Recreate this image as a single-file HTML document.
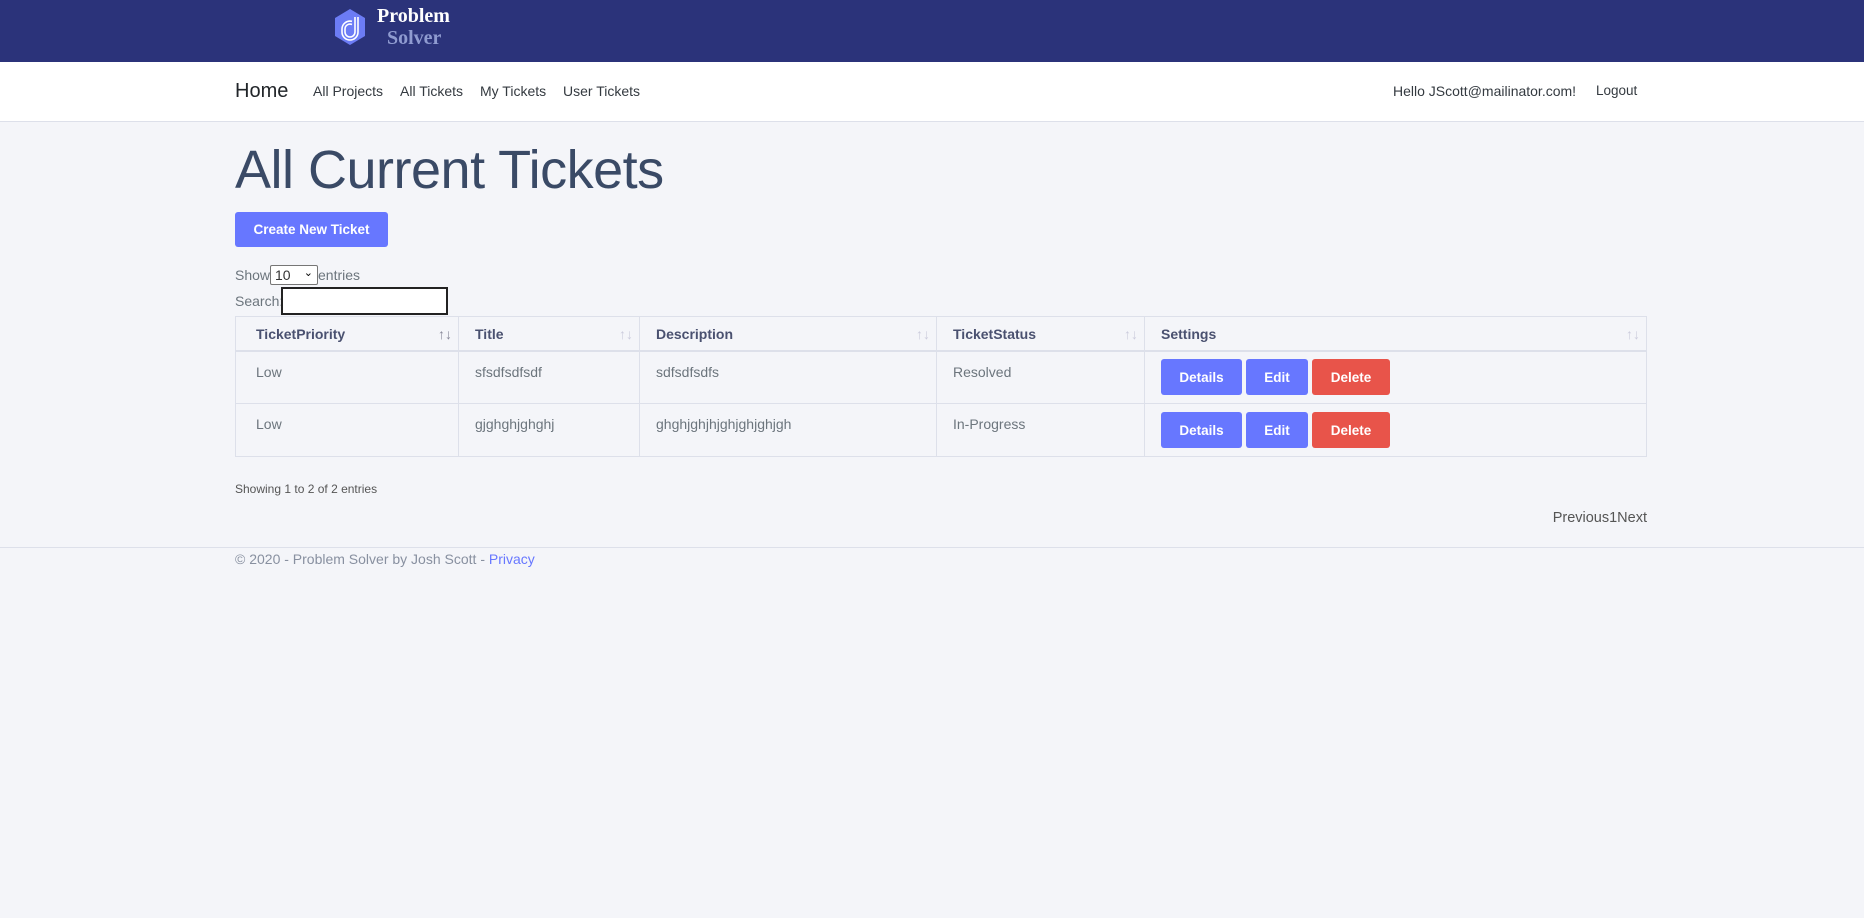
<!DOCTYPE html>
<html><head><meta charset="utf-8"><style>
*{box-sizing:border-box;margin:0;padding:0}
body{width:1864px;height:918px;background:#f4f5f9;font-family:"Liberation Sans",Arial,sans-serif;color:#6c757d;position:relative;overflow:hidden}
.top{position:absolute;left:0;top:0;width:1864px;height:62px;background:#2b337a}
.nav{position:absolute;left:0;top:62px;width:1864px;height:60px;background:#fff;border-bottom:1px solid #dde0ea}
.abs{position:absolute;white-space:nowrap}
.nl{font-size:14px;color:#343a40;top:83px}
h1{position:absolute;left:235px;top:139px;font-size:54px;font-weight:normal;color:#3a4a66;letter-spacing:-0.5px;white-space:nowrap}
.btn{position:absolute;border-radius:3px;color:#fff;font-weight:bold;font-size:13.5px;display:flex;align-items:center;justify-content:center}
.b{background:#6777ff}.r{background:#e8544a}
table{position:absolute;left:235px;top:316px;width:1412px;border-collapse:collapse;font-size:14px}
td,th{border:1px solid #dde0ea;text-align:left;vertical-align:top}
th{height:34px;color:#4a5170;font-weight:bold;padding:9px 16px 0;border-bottom:2px solid #dde0ea;position:relative}
td{height:53px;padding:12px 16px 0;color:#6c757d}
td:first-child,th:first-child{padding-left:20px}
.ar{position:absolute;right:6px;top:9px;color:#ccd;font-weight:normal;font-size:14px}
</style></head><body>
<div class="top">
<svg style="position:absolute;left:334px;top:9px" width="32" height="36" viewBox="0 0 32 36"><polygon points="16,0 31,9 31,27 16,36 1,27 1,9" fill="#6c7cf5"/><g fill="none" stroke="#fff" stroke-width="1.6"><path d="M21 8v15a5 5 0 0 1-10 0v-3a5 5 0 0 1 7-4.5"/><path d="M24 8v15a8 8 0 0 1-16 0v-3a8 8 0 0 1 10-7.7"/></g></svg>
<div class="abs" style="left:377px;top:5px;font-family:'Liberation Serif',serif;font-weight:bold;font-size:20px;color:#fff">Problem</div>
<div class="abs" style="left:387px;top:27px;font-family:'Liberation Serif',serif;font-weight:bold;font-size:20px;color:#8f9bd0">Solver</div>
</div>
<div class="nav"></div>
<div class="abs" style="left:235px;top:80px;font-size:20px;color:#212529">Home</div>
<div class="abs nl" style="left:313px">All Projects</div>
<div class="abs nl" style="left:400px">All Tickets</div>
<div class="abs nl" style="left:480px">My Tickets</div>
<div class="abs nl" style="left:563px">User Tickets</div>
<div class="abs nl" style="left:1393px">Hello JScott@mailinator.com!</div>
<div class="abs nl" style="left:1596px;font-size:13.5px">Logout</div>
<h1>All Current Tickets</h1>
<div class="btn b" style="left:235px;top:212px;width:153px;height:35px">Create New Ticket</div>
<div class="abs" style="left:235px;top:267px;font-size:14px">Show</div>
<div class="abs" style="left:270px;top:265px;width:48px;height:20px;border:1px solid #767676;border-radius:2px;background:#fff;font-size:14px;color:#333;padding:1px 4px">10 <span style="position:absolute;right:4px;top:0;font-size:11px;color:#000">&#8964;</span></div>
<div class="abs" style="left:318px;top:267px;font-size:14px">entries</div>
<div class="abs" style="left:235px;top:293px;font-size:14px">Search:</div>
<div class="abs" style="left:281px;top:287px;width:167px;height:28px;border:2px solid #222;background:#fff"></div>
<table>
<tr><th style="width:223px">TicketPriority<span class="ar" style="color:#889">↑↓</span></th><th style="width:181px">Title<span class="ar">↑↓</span></th><th style="width:297px">Description<span class="ar">↑↓</span></th><th style="width:208px">TicketStatus<span class="ar">↑↓</span></th><th>Settings<span class="ar">↑↓</span></th></tr>
<tr><td>Low</td><td>sfsdfsdfsdf</td><td>sdfsdfsdfs</td><td>Resolved</td><td></td></tr>
<tr><td>Low</td><td>gjghghjghghj</td><td>ghghjghjhjghjghjghjgh</td><td>In-Progress</td><td></td></tr>
</table>
<div class="btn b" style="left:1161px;top:359px;width:81px;height:36px">Details</div>
<div class="btn b" style="left:1246px;top:359px;width:62px;height:36px">Edit</div>
<div class="btn r" style="left:1312px;top:359px;width:78px;height:36px">Delete</div>
<div class="btn b" style="left:1161px;top:412px;width:81px;height:36px">Details</div>
<div class="btn b" style="left:1246px;top:412px;width:62px;height:36px">Edit</div>
<div class="btn r" style="left:1312px;top:412px;width:78px;height:36px">Delete</div>
<div class="abs" style="left:235px;top:482px;font-size:12px;color:#555">Showing 1 to 2 of 2 entries</div>
<div class="abs" style="right:217px;top:510px;font-size:14.5px;color:#555">Previous1Next</div>
<div class="abs" style="left:0;top:547px;width:1864px;border-top:1px solid #dde0ea"></div>
<div class="abs" style="left:235px;top:551px;font-size:14px;color:#8890a0">© 2020 - Problem Solver by Josh Scott - <span style="color:#6777ff">Privacy</span></div>
</body></html>
